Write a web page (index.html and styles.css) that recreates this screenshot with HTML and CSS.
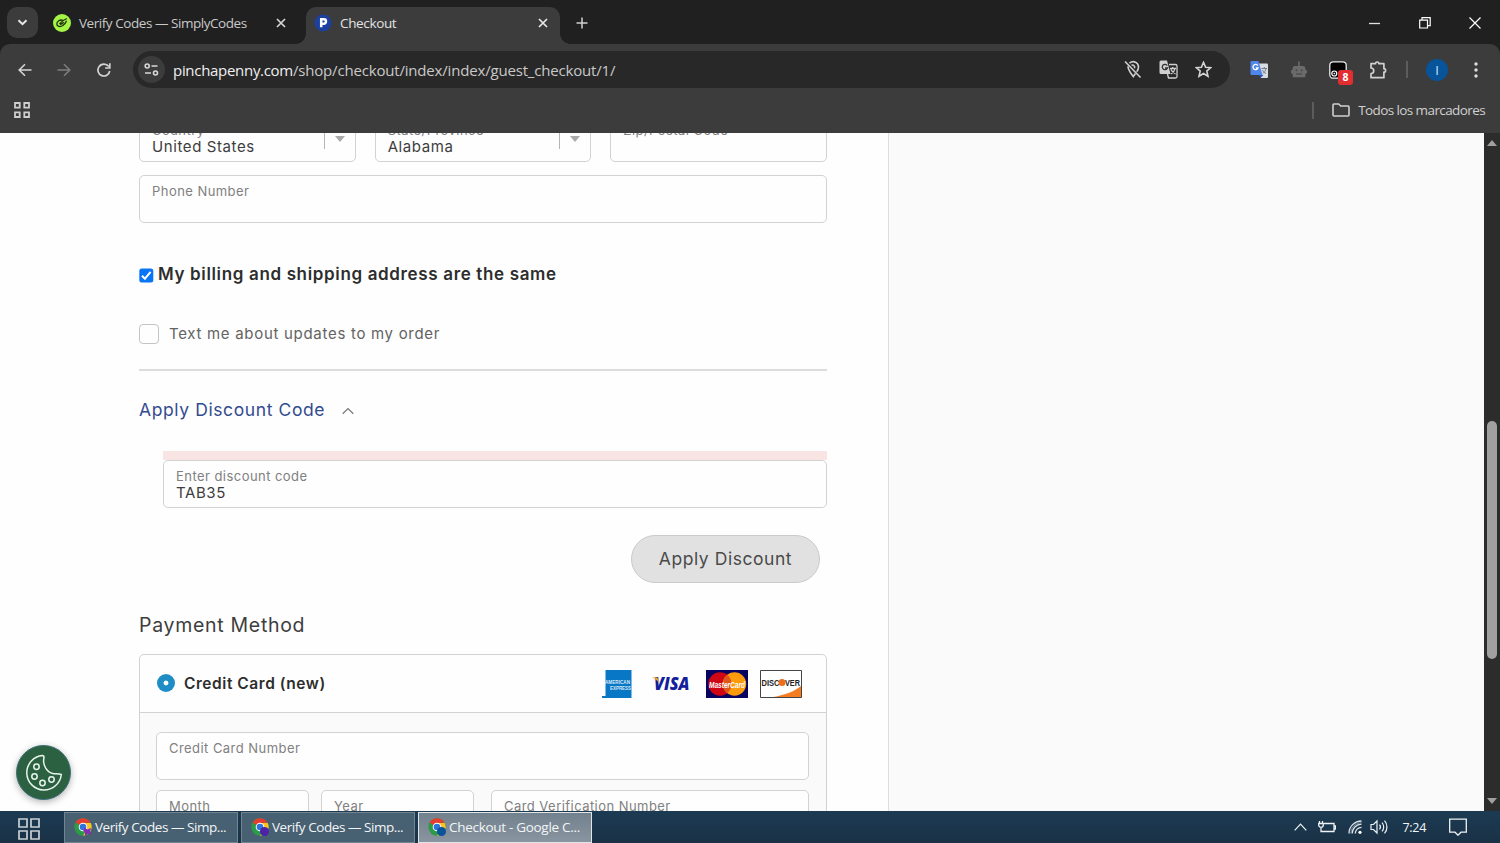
FILE: index.html
```
<!DOCTYPE html>
<html lang="en">
<head>
  <meta charset="UTF-8">
  <title>Checkout</title>
  <link rel="stylesheet" href="styles.css">
</head>
<body>
  <div class="browser">
    <div class="tabs">
      <div class="tab-search">
        <svg width="31" height="31" viewBox="0 0 31 31"><path d="M11.5 13.2l4 4 4-4" fill="none" stroke="#e8e8e8" stroke-width="2"/></svg>
      </div>
      <div class="tab">
        <svg width="18" height="18" viewBox="0 0 18 18"><circle cx="9" cy="9" r="9" fill="#a4f545"/><g fill="none" stroke="#20300f" stroke-width="1.3"><path d="M10 6.500C7 5 3.800 7.500 3.800 10s3.500 3.300 6 1.500c1.800-1.300 3.200-3 3.700-4.700M6.500 9.800c2-2.500 4-4 7.500-5.300M7 10.200c1.500.3 2.800-.7 3.800-2"/></g></svg>
        <span class="tab-title verify">Verify Codes — SimplyCodes</span>
        <svg class="close" width="10" height="10" viewBox="0 0 10 10"><path d="M1 1l8 8M9 1L1 9" stroke="#d5d5d5" stroke-width="1.7"/></svg>
      </div>
      <div class="tab active">
        <svg width="18" height="18" viewBox="0 0 18 18"><circle cx="9" cy="9" r="8.5" fill="#1b409f"/><path d="M7.2 13.3V5.3h2.6a2.2 2.2 0 010 4.4H7.2" fill="none" stroke="#fff" stroke-width="2.5"/></svg>
        <span class="tab-title">Checkout</span>
        <svg class="close" width="10" height="10" viewBox="0 0 10 10"><path d="M1 1l8 8M9 1L1 9" stroke="#e8e8e8" stroke-width="1.7"/></svg>
      </div>
      <svg class="new-tab" width="12" height="12" viewBox="0 0 12 12"><path d="M6 .5v11M.5 6h11" stroke="#d0d0d0" stroke-width="1.5"/></svg>
      <div class="window-buttons">
        <svg width="12" height="12" viewBox="0 0 12 12"><path d="M0 6.5h11" stroke="#e0e0e0" stroke-width="1.3"/></svg>
        <svg width="12" height="12" viewBox="0 0 12 12"><path d="M.7 3.2h7.8V11H.7zM3 3V.7h8.2v8H8.6" fill="none" stroke="#fff" stroke-width="1.2"/></svg>
        <svg width="12" height="12" viewBox="0 0 12 12"><path d="M.5.5l11 11M11.5.5l-11 11" stroke="#fff" stroke-width="1.2"/></svg>
      </div>
    </div>

    <div class="toolbar">
      <div class="nav">
        <svg width="14" height="14" viewBox="0 0 14 14"><path d="M13.5 7H1.5M7 1.2L1.2 7 7 12.8" fill="none" stroke="#d4d4d4" stroke-width="1.6"/></svg>
        <svg width="14" height="14" viewBox="0 0 14 14"><path d="M.5 7h12M7 1.2L12.8 7 7 12.8" fill="none" stroke="#7d7d7d" stroke-width="1.6"/></svg>
        <svg class="reload" width="14" height="14" viewBox="0 0 14 14"><path d="M12.7 8A5.9 5.9 0 111.9 3.900 5.900 5.900 0 0111.800 3.600M12.800.3v4.700H8.100" fill="none" stroke="#d4d4d4" stroke-width="1.7"/></svg>
      </div>
      <div class="omnibox">
        <div class="site-info">
          <svg width="15" height="13" viewBox="0 0 15 13"><g fill="none" stroke="#d8d8d8" stroke-width="1.6"><circle cx="3.2" cy="3" r="2"/><path d="M7.500 3h6M1 10h6"/><circle cx="11.5" cy="10" r="2"/></g></svg>
        </div>
        <div class="url"><span class="host">pinchapenny.com</span>/shop/checkout/index/index/guest_checkout/1/</div>
        <div class="omni-icons">
          <svg width="18" height="19" viewBox="0 0 18 19"><g fill="none" stroke="#cfcfcf" stroke-width="1.6"><path d="M5.500 3.200C9.500-.2 14.500 2.600 14.500 7c0 1.800-.7 3.400-1.800 4.800M4 6.300c0 4.100 3 7 5.300 10.200l2.100-3"/><path d="M7.500 5.200a2.300 2.300 0 013 3"/><path d="M1 1.500l15.500 16"/></g></svg>
          <svg width="19" height="19" viewBox="0 0 19 19"><path d="M2 .5h6l3.500 13.500H2A1.500 1.500 0 01.5 12.500V2A1.500 1.500 0 012 .5z" fill="#cfcfcf"/><path d="M8.300 5.600A2.700 2.700 0 108.500 8H6" fill="none" stroke="#333" stroke-width="1.3"/><path d="M10 4.500h6.500a1.500 1.500 0 011.500 1.500v10.500a1.500 1.500 0 01-1.500 1.500H9.500L8.500 14M11 8.500h6M13.700 7v1.500M16 8.500c-.5 3-2.500 4.500-4 5.500M12 9.500c1 2.500 2.500 3.500 4.500 4.500" fill="none" stroke="#cfcfcf" stroke-width="1.3"/></svg>
          <svg width="17" height="17" viewBox="0 0 17 17"><path d="M8.500 1.300l2.100 4.900 5.200.4-4 3.500 1.200 5.200-4.500-2.800-4.500 2.800 1.200-5.200-4-3.500 5.200-.4z" fill="none" stroke="#d4d4d4" stroke-width="1.6"/></svg>
        </div>
      </div>
      <div class="extensions">
        <svg class="ext-translate" width="19" height="19" viewBox="0 0 19 19"><path d="M8 3.500h9a1 1 0 011 1v12.500a1 1 0 01-1 1h-6z" fill="#d9dde1"/><path d="M1.500 1h7l4 14h-11a1 1 0 01-1-1V2a1 1 0 011-1z" fill="#4f86ec"/><path d="M9 15h4.500L10.500 18z" fill="#2b55b5"/><path d="M7.800 5.700A2.600 2.600 0 108 8H5.800" fill="none" stroke="#fff" stroke-width="1.3"/><path d="M11.500 8.500H17M14.300 7v1.500M16 8.500c-.4 2.500-2 4-3.200 5M12.500 10c.7 1.800 2 2.800 3.500 3.500" fill="none" stroke="#73808c"/></svg>
        <svg class="ext-bot" width="18" height="18" viewBox="0 0 18 18"><path d="M8.200.5h1.600v4.500H13a2.300 2.300 0 012.300 2.300v1.200a2.300 2.300 0 010 4.500v3.200H2.700V13a2.300 2.300 0 010-4.500V7.300A2.300 2.300 0 015 5h3.200z" fill="#6b6b6b"/><circle cx="6.300" cy="9.300" r="1" fill="#484848"/><circle cx="11.700" cy="9.300" r="1" fill="#484848"/><path d="M6 13h6" stroke="#484848" stroke-width="1.2"/></svg>
        <div class="ext-badged">
          <svg width="18" height="18" viewBox="0 0 18 18"><rect x=".8" y=".8" width="16.4" height="16.4" rx="3.5" fill="#000" stroke="#eee" stroke-width="1.3"/><circle cx="5.3" cy="12.5" r="2.5" fill="#111" stroke="#fff" stroke-width="1.2"/><circle cx="5.3" cy="12.5" r=".8" fill="#fff"/></svg>
          <span class="badge">8</span>
        </div>
        <svg class="ext-puzzle" width="19" height="18" viewBox="0 0 19 18"><path d="M2 2.700h4.500a1.700 1.700 0 013.400 0h5v5a1.700 1.700 0 010 3.400v5.600H2v-4.200a2.500 2.500 0 000-5.500z" fill="none" stroke="#d0d0d0" stroke-width="1.7" stroke-linejoin="round"/></svg>
        <div class="divider"></div>
        <div class="avatar">I</div>
        <svg class="menu" width="4" height="16" viewBox="0 0 4 16"><g fill="#dedede"><circle cx="2" cy="2" r="1.7"/><circle cx="2" cy="8" r="1.7"/><circle cx="2" cy="14" r="1.7"/></g></svg>
      </div>
    </div>

    <div class="bookmarks">
      <svg width="16" height="16" viewBox="0 0 16 16"><path d="M1 1h4.700v4.700H1zM10.300 1H15v4.700h-4.700zM1 10.300h4.700V15H1zM10.300 10.300H15V15h-4.700z" fill="none" stroke="#cfcfcf" stroke-width="1.8"/></svg>
      <div class="all-bookmarks">
        <div class="divider"></div>
        <svg width="18" height="14" viewBox="0 0 18 14"><path d="M1 2a1 1 0 011-1h4.700l2 2H16a1 1 0 011 1v8a1 1 0 01-1 1H2a1 1 0 01-1-1z" fill="none" stroke="#cfcfcf" stroke-width="1.6"/></svg>
        <span>Todos los marcadores</span>
      </div>
    </div>

    <div class="page">
      <main class="checkout">
        <div class="address-row">
          <div class="field select"><label>Country</label><span>United States</span></div>
          <div class="field select"><label>State/Province</label><span>Alabama</span></div>
          <div class="field"><label>Zip/Postal Code</label></div>
        </div>
        <div class="field phone"><label>Phone Number</label></div>

        <div class="billing">
          <svg width="15" height="15" viewBox="0 0 15 15"><rect x=".3" y=".5" width="14" height="14" rx="2.5" fill="#0875f4"/><path d="M3 7.800l2.900 2.900 5.700-6.900" fill="none" stroke="#fff" stroke-width="2"/></svg>
          <strong>My billing and shipping address are the same</strong>
        </div>
        <div class="sms"><i class="box"></i><span>Text me about updates to my order</span></div>
        <hr>

        <div class="discount-toggle">
          <span>Apply Discount Code</span>
          <svg width="12" height="8" viewBox="0 0 12 8"><path d="M.7 6.700L6 1.500l5.300 5.200" fill="none" stroke="#777" stroke-width="1.2"/></svg>
        </div>
        <div class="discount">
          <div class="error"></div>
          <div class="field"><label>Enter discount code</label><span>TAB35</span></div>
        </div>
        <button class="apply">Apply Discount</button>

        <h2>Payment Method</h2>
        <div class="payment">
          <div class="payment-head">
            <i class="radio"></i>
            <strong>Credit Card (new)</strong>
            <div class="cards">
              <svg class="amex" width="30" height="28" viewBox="0 0 30 28"><path d="M3.500 0h26v28H0v-2h3.500z" fill="#0878c6"/><g fill="#fff" fill-opacity=".85" font-family="Liberation Sans" font-weight="bold" font-size="5.500"><text x="3" y="14" textLength="25" lengthAdjust="spacingAndGlyphs">AMERICAN</text><text x="8" y="19.500" textLength="21" lengthAdjust="spacingAndGlyphs">EXPRESS</text></g></svg>
              <svg class="visa" width="38" height="14" viewBox="0 0 38 14"><text x="2" y="13.3" font-family="Open Sans" font-weight="800" font-style="italic" font-size="18" textLength="35.500" lengthAdjust="spacingAndGlyphs" fill="#12209b">VISA</text><path d="M0 .5h5.500l2 6C5.500 3.500 3 1.500 0 .5z" fill="#f3a12b"/></svg>
              <svg class="mastercard" width="42" height="28" viewBox="0 0 42 28"><path d="M0 0h42v28H0z" fill="#080361"/><circle cx="14" cy="14" r="11.7" fill="#cf0613"/><circle cx="28.5" cy="14" r="11.7" fill="#fb9b0c"/><path d="M21.200 4.800a11.700 11.700 0 010 18.400 11.700 11.700 0 010-18.400z" fill="#df5718"/><text x="3" y="17.500" font-family="Liberation Sans" font-weight="bold" font-style="italic" font-size="9" textLength="36" lengthAdjust="spacingAndGlyphs" fill="#fff">MasterCard</text></svg>
              <svg class="discover" width="42" height="28" viewBox="0 0 42 28"><path d="M.5.5h41v27H.5z" fill="#fff"/><path d="M41 16C35 21 26 25 11 27.500h30z" fill="#f37d20"/><path d="M.5.5h41v27H.5z" fill="none" stroke="#444"/><g font-family="Liberation Sans" font-weight="bold" font-size="9.500" fill="#222"><text x="1.500" y="16" textLength="18" lengthAdjust="spacingAndGlyphs">DISC</text><text x="25" y="16" textLength="15" lengthAdjust="spacingAndGlyphs">VER</text></g><circle cx="22" cy="12.5" r="3.5" fill="#ee6f1b"/></svg>
            </div>
          </div>
          <div class="payment-body">
            <div class="field"><label>Credit Card Number</label></div>
            <div class="card-row">
              <div class="field"><label>Month</label></div>
              <div class="field"><label>Year</label></div>
              <div class="field cvv"><label>Card Verification Number</label></div>
            </div>
          </div>
        </div>
      </main>
      <aside class="summary"></aside>
      <div class="scrollbar">
        <svg width="10" height="6" viewBox="0 0 10 6"><path d="M0 6l5-6 5 6z" fill="#a0a0a0"/></svg>
        <div class="thumb"></div>
        <svg width="10" height="6" viewBox="0 0 10 6"><path d="M0 0l5 6 5-6z" fill="#a0a0a0"/></svg>
      </div>
      <div class="cookie">
        <svg width="38" height="38" viewBox="0 0 38 38"><g fill="none" stroke="#e9f5ec" stroke-width="1.5"><path d="M17.500 1.500A17.300 17.300 0 1036.300 20.500c-3-1-6-.5-8.500-1C23 18.500 17 12 19 3.500c0-1.300-.5-2-1.500-2z"/><circle cx="11.5" cy="12.7" r="2.7"/><circle cx="9.5" cy="22.5" r="2.7"/><circle cx="17.5" cy="29" r="2.7"/><circle cx="26.5" cy="25.500" r="2.7"/></g></svg>
      </div>
    </div>

    <svg class="symbols">
      <symbol id="chrome" viewBox="0 0 18 18">
        <circle cx="9" cy="9" r="8.7" fill="#2b9b49"/>
        <path d="M9 9L1.500 4.600A8.700 8.700 0 0116.600 4.700L9 5z" fill="#e33e2f"/>
        <path d="M9 5h7.700A8.700 8.700 0 019 17.700l3.800-6.500z" fill="#fbc322"/>
        <circle cx="9" cy="9" r="4.3" fill="#fff"/>
        <circle cx="9" cy="9" r="3.3" fill="#2f72e0"/>
      </symbol>
    </svg>
    <div class="taskbar">
      <svg class="start" width="22" height="22" viewBox="0 0 22 22"><path d="M1 1h8v8H1zM13 1h8v8h-8zM1 13h8v8H1zM13 13h8v8h-8z" fill="none" stroke="#c9d0d5" stroke-width="1.7"/></svg>
      <div class="task">
        <svg width="18" height="18" viewBox="0 0 18 18"><use href="#chrome"/><path d="M11 10l2.500 1.500L17 10l-1 3.500 2 2.500-4-.3L11 18v-3.500L9 12z" fill="#842bb5"/></svg>
        <span>Verify Codes — Simp...</span>
      </div>
      <div class="task">
        <svg width="18" height="18" viewBox="0 0 18 18"><use href="#chrome"/><circle cx="13.5" cy="13.5" r="4.5" fill="#4b22a8"/></svg>
        <span>Verify Codes — Simp...</span>
      </div>
      <div class="task current">
        <svg width="18" height="18" viewBox="0 0 18 18"><use href="#chrome"/><circle cx="13.5" cy="13.5" r="4.5" fill="#07539b"/></svg>
        <span>Checkout - Google C...</span>
      </div>
      <div class="tray">
        <svg width="13" height="8" viewBox="0 0 13 8"><path d="M.7 7.300L6.500 1.200l5.800 6.100" fill="none" stroke="#eef2f4" stroke-width="1.2"/></svg>
        <svg class="battery" width="18" height="12" viewBox="0 0 18 12"><path d="M6 2.500h10v8H5M16.500 5h1v3h-1M1.500 0v2.500M4.500 0v2.500M.7 2.500h4.600V4a2.300 2.300 0 01-4.600 0zM3 6.500v4h3" fill="none" stroke="#eef2f4" stroke-width="1.3"/></svg>
        <svg class="wifi" width="14" height="14" viewBox="0 0 14 14"><g fill="none" stroke="#dbe2e7"><path d="M1 13.500A12.500 12.500 0 0113.500 1M4.200 13.500a9.300 9.300 0 019.300-9.300M7.300 13.500a6.200 6.200 0 016.200-6.200" stroke-width="1.3"/><path d="M2.700 13.500A10.900 10.900 0 0113.500 2.600" stroke-width=".5"/></g><circle cx="12" cy="12.3" r="1.6" fill="#fff"/></svg>
        <svg class="volume" width="18" height="16" viewBox="0 0 18 16"><path d="M1 5.500h2.500L7 2v12l-3.500-3.500H1zM9.500 5.700a3.500 3.500 0 010 4.600M12 3.700a6.300 6.300 0 010 8.600M14.500 1.700a9.300 9.300 0 010 12.600" fill="none" stroke="#eef2f4" stroke-width="1.2"/></svg>
        <span class="clock">7:24</span>
        <svg class="notice" width="18" height="18" viewBox="0 0 18 18"><path d="M.7 1.200h16.600v13H12l-3 3-3-3H.7z" fill="none" stroke="#eef2f4" stroke-width="1.3"/></svg>
      </div>
    </div>
  </div>
</body>
</html>
```
FILE: styles.css
```
* { box-sizing: border-box; }
body {
  margin: 0;
  font-family: "Open Sans", "Noto Sans", sans-serif;
}
svg { display: block; flex-shrink: 0; }
.browser {
  width: 1500px;
  height: 843px;
  display: flex;
  flex-direction: column;
  overflow: hidden;
  background: #202020;
}

/* tab strip */
.tabs {
  height: 44px;
  display: flex;
  align-items: flex-start;
  padding: 7px 19px 0 7px;
  color: #e3e3e3;
}
.tab-search {
  width: 31px;
  height: 31px;
  border-radius: 10px;
  background: #3c3c3c;
}
.tab {
  height: 37px;
  width: 253px;
  padding: 0 20px 5px 0;
  margin-left: 15px;
  display: flex;
  align-items: center;
  font-size: 13.5px;
}
.tab-title {
  margin-left: 8px;
  letter-spacing: -0.35px;
  white-space: nowrap;
}
.tab-title.verify {
  color: #c9c9c9;
  letter-spacing: -0.45px;
}
.tab .close { margin-left: auto; }
.tab.active {
  position: relative;
  width: 254px;
  margin-left: 0;
  padding: 0 12px 5px 8px;
  background: #3c3c3c;
  border-radius: 10px 10px 0 0;
}
.tab.active::before,
.tab.active::after {
  content: "";
  position: absolute;
  bottom: 0;
  width: 10px;
  height: 10px;
}
.tab.active::before { left: -10px; background: radial-gradient(circle at 0 0, transparent 9.5px, #3c3c3c 10px); }
.tab.active::after { right: -10px; background: radial-gradient(circle at 100% 0, transparent 9.5px, #3c3c3c 10px); }
.new-tab { margin: 10px 0 0 16px; }
.window-buttons {
  margin-left: auto;
  padding-top: 10px;
  display: flex;
  gap: 38px;
}

/* toolbar */
.toolbar {
  height: 52px;
  padding: 7px 22px 0 18px;
  display: flex;
  align-items: flex-start;
  background: #3c3c3c;
  border-radius: 10px 10px 0 0;
}
.nav {
  width: 115px;
  height: 37px;
  display: flex;
  align-items: center;
  gap: 25px;
}
.reload { margin-left: 1px; }
.omnibox {
  width: 1097px;
  height: 37px;
  border-radius: 19px;
  background: #282828;
  display: flex;
  align-items: center;
  padding: 0 18px 0 5px;
}
.site-info {
  width: 27px;
  height: 27px;
  border-radius: 50%;
  background: #3c3c3c;
  display: flex;
  align-items: center;
  justify-content: center;
}
.url {
  margin-left: 8px;
  color: #c9c9c9;
  font-size: 15px;
  letter-spacing: -0.18px;
}
.url .host { color: #f0f0f0; letter-spacing: -0.3px; }
.omni-icons {
  margin-left: auto;
  display: flex;
  align-items: center;
  gap: 17px;
}
.extensions {
  height: 37px;
  margin-left: auto;
  display: flex;
  align-items: center;
}
.ext-bot { margin-left: 21px; }
.ext-badged {
  position: relative;
  margin-left: 21px;
}
.badge {
  position: absolute;
  left: 9px;
  top: 9px;
  width: 15px;
  height: 15px;
  border-radius: 3px;
  background: #e22e31;
  color: #fff;
  font-size: 10.5px;
  font-weight: bold;
  line-height: 15px;
  text-align: center;
}
.ext-puzzle { margin-left: 22px; }
.divider {
  width: 2px;
  height: 17px;
  background: #5c5c5c;
}
.extensions .divider { margin-left: 18px; }
.avatar {
  width: 22px;
  height: 22px;
  margin-left: 18px;
  border-radius: 50%;
  background: #07549b;
  color: #cfe2f5;
  font-size: 13px;
  line-height: 22px;
  text-align: center;
}
.menu { margin-left: 26px; }

.bookmarks {
  height: 37px;
  padding: 0 15px 9px 14px;
  display: flex;
  align-items: center;
  justify-content: space-between;
  background: #3c3c3c;
}
.all-bookmarks {
  display: flex;
  align-items: center;
  color: #d0d0d0;
  font-size: 13.5px;
  letter-spacing: -0.6px;
}
.all-bookmarks svg { margin: 0 8px 0 18px; }

/* checkout page */
.page {
  position: relative;
  height: 678px;
  display: flex;
  overflow: hidden;
  background: #fafafa;
  font-family: Inter, sans-serif;
}
.checkout {
  width: 889px;
  padding: 0 61px 0 139px;
  background: #fefefe;
  border-right: 1px solid #dedede;
}
.field {
  height: 48px;
  padding: 7px 12px 0;
  border: 1px solid #d2d2d2;
  border-radius: 5px;
  background: #fefefe;
  color: #3d3d3d;
  font-size: 15px;
  line-height: 17px;
}
.field label {
  display: block;
  color: #808080;
  font-size: 13px;
  line-height: 16px;
  letter-spacing: 0.45px;
}
.field span {
  display: block;
  letter-spacing: 0.6px;
}
.address-row {
  margin-top: -19px;
  display: grid;
  grid-template-columns: repeat(3, 1fr);
  gap: 19px;
}
.select { position: relative; }
.select::before {
  content: "";
  position: absolute;
  right: 30px;
  top: 8px;
  width: 1px;
  height: 26px;
  background: #b5b5b5;
}
.select::after {
  content: "";
  position: absolute;
  right: 10px;
  top: 21px;
  border: 5.5px solid transparent;
  border-top: 6px solid #aaa;
  border-bottom: 0;
}
.phone { margin-top: 13px; }
.billing {
  height: 20px;
  margin-top: 42px;
  display: flex;
  align-items: center;
  gap: 4px;
  color: #2d2d2d;
  font-size: 17px;
  letter-spacing: 0.65px;
}
.billing strong {
  font-weight: 600;
  padding-bottom: 2px;
}
.sms {
  height: 20px;
  margin-top: 39px;
  display: flex;
  align-items: center;
  gap: 10px;
  color: #636363;
  font-size: 15px;
  letter-spacing: 0.7px;
}
.sms span { padding-bottom: 2px; }
.box {
  width: 20px;
  height: 20px;
  border: 1px solid #c4c4c4;
  border-radius: 4px;
}
hr {
  height: 2px;
  margin: 25px 0 0;
  border: 0;
  background: #dcdcdc;
}
.discount-toggle {
  height: 24px;
  margin-top: 27px;
  display: flex;
  align-items: center;
  gap: 17px;
  color: #334b8f;
  font-size: 17.5px;
  letter-spacing: 0.6px;
}
.discount-toggle span { padding-bottom: 2px; }
.discount-toggle svg { margin-top: 2px; }
.discount { margin: 29px 0 0 24px; }
.error {
  height: 9px;
  background: #f9e4e4;
}
.apply {
  display: block;
  width: 189px;
  height: 48px;
  margin: 27px 7px 0 auto;
  padding: 0 0 2px;
  border: 1px solid #cbcbcb;
  border-radius: 24px;
  background: #e1e1e1;
  color: #4a4a4a;
  font-family: inherit;
  font-size: 17.5px;
  letter-spacing: 0.55px;
}
h2 {
  margin: 30px 0 0;
  color: #3d3d3d;
  font-size: 19.5px;
  font-weight: 400;
  line-height: 24px;
  letter-spacing: 0.7px;
}
.payment {
  margin-top: 17px;
  border: 1px solid #d2d2d2;
  border-radius: 5px 5px 0 0;
}
.payment-head {
  height: 58px;
  padding: 0 24px 0 17px;
  display: flex;
  align-items: center;
  border-bottom: 1px solid #d2d2d2;
  color: #2d2d2d;
  font-size: 15.5px;
}
.payment-head strong {
  margin-left: 9px;
  font-weight: 600;
  letter-spacing: 0.55px;
}
.radio {
  width: 18px;
  height: 18px;
  margin-bottom: 2px;
  border-radius: 50%;
  background: radial-gradient(circle, #fff 2px, #1e8dc6 2.8px);
}
.cards {
  margin-left: auto;
  display: flex;
  align-items: center;
}
.visa { margin-left: 20px; }
.mastercard { margin-left: 16px; }
.discover { margin-left: 12px; }
.payment-body {
  height: 140px;
  padding: 19px 17px 19px 16px;
  background: #fafafa;
}
.card-row {
  margin-top: 10px;
  display: flex;
  gap: 12px;
}
.card-row .field { width: 153px; }
.card-row .cvv {
  flex: 1;
  margin-left: 5px;
}
.summary { flex: 1; }
.scrollbar {
  width: 16px;
  padding: 7px 0;
  display: flex;
  flex-direction: column;
  align-items: center;
  background: #2c2c2c;
}
.thumb {
  width: 10px;
  height: 238px;
  margin: 275px 0 auto;
  border-radius: 5px;
  background: #a0a0a0;
}
.cookie {
  position: absolute;
  left: 16px;
  top: 612px;
  width: 55px;
  height: 55px;
  border: 1px solid #3d7078;
  border-radius: 50%;
  background: #2b6040;
  box-shadow: 0 2px 7px rgba(0, 0, 0, 0.3);
  display: flex;
  align-items: center;
  justify-content: center;
}

/* taskbar */
.symbols {
  width: 0;
  height: 0;
}
.taskbar {
  height: 32px;
  padding: 0 33px 0 18px;
  display: flex;
  align-items: center;
  background: linear-gradient(#1c3b53, #1a3145);
  color: #f2f5f7;
}
.start { margin: 3px 24px 0 0; }
.task {
  width: 174px;
  height: 31px;
  margin: 1px 3px 0 0;
  padding: 0 0 2px 9px;
  display: flex;
  align-items: center;
  gap: 3px;
  border: 1px solid #708491;
  background: #486172;
  font-size: 13.5px;
  letter-spacing: -0.45px;
  white-space: nowrap;
}
.task.current {
  border-color: #e0e5e8;
  background: linear-gradient(#72818e, #8995a0);
  letter-spacing: -0.3px;
}
.tray {
  margin-left: auto;
  display: flex;
  align-items: center;
}
.battery { margin-left: 11px; }
.wifi { margin-left: 12px; }
.volume { margin-left: 8px; }
.clock {
  margin-left: 14px;
  font-size: 12.5px;
  letter-spacing: -0.3px;
}
.notice { margin-left: 23px; }
```
